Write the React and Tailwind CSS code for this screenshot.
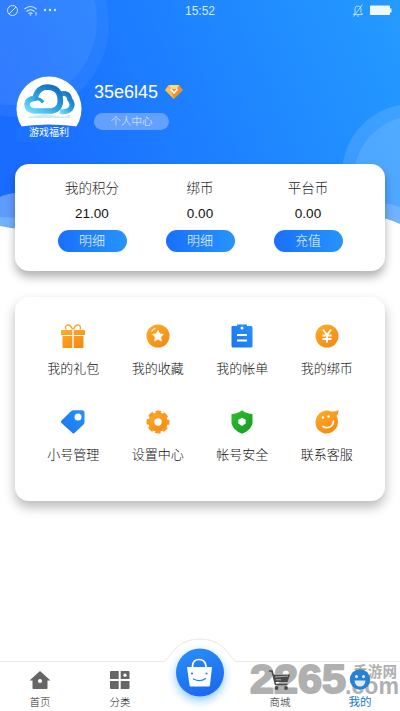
const FONT = { sans: "font-['Liberation_Sans','Noto_Sans_CJK_SC',sans-serif]" };

function Defs() {
  return (
    <svg width="0" height="0" className="absolute">
      <defs>
        <linearGradient id="orange" x1="0" y1="0" x2="0.7" y2="1">
          <stop offset="0" stopColor="#ffae2b" />
          <stop offset="1" stopColor="#f58a12" />
        </linearGradient>
        <linearGradient id="blue" x1="0" y1="1" x2="1" y2="0">
          <stop offset="0" stopColor="#1b74ee" />
          <stop offset="1" stopColor="#2493fb" />
        </linearGradient>
        <linearGradient id="bagBlue" x1="0" y1="0" x2="0.4" y2="1">
          <stop offset="0" stopColor="#2b90f6" />
          <stop offset="1" stopColor="#1c6cf0" />
        </linearGradient>
        <linearGradient id="green" x1="0" y1="0" x2="1" y2="1">
          <stop offset="0" stopColor="#2fc02d" />
          <stop offset="1" stopColor="#149a22" />
        </linearGradient>
        <linearGradient id="header" x1="0" y1="0.3" x2="1" y2="0">
          <stop offset="0" stopColor="#1a6cff" />
          <stop offset="0.5" stopColor="#1e84ff" />
          <stop offset="1" stopColor="#259bff" />
        </linearGradient>
        <linearGradient id="cloud" x1="0" y1="1" x2="0.8" y2="0">
          <stop offset="0" stopColor="#6fe0f5" />
          <stop offset="0.5" stopColor="#2ba3e2" />
          <stop offset="1" stopColor="#1670c4" />
        </linearGradient>
      </defs>
    </svg>
  );
}

function HeaderArt() {
  return (
    <svg className="absolute left-0 top-0 -z-10" width="400" height="270" viewBox="0 0 400 270">
      <rect width="400" height="270" fill="url(#header)" />
      <circle cx="16" cy="24" r="93" fill="#fff" opacity="0.05" />
      <circle cx="12" cy="20" r="85" fill="#fff" opacity="0.06" />
      <circle cx="412" cy="174" r="70" fill="#fff" opacity="0.12" />
      <circle cx="416" cy="178" r="62" fill="#fff" opacity="0.1" />
      <path d="M0 197Q8 193 18 193L70 220V270H0Z" fill="#6da5fb" opacity="0.85" />
      <path d="M0 217L60 220L340 205Q375 198 400 207V270H0Z" fill="#74b5fd" opacity="0.85" />
      <path d="M0 226Q60 238 200 230Q350 200 400 224V270H0Z" fill="#fff" />
    </svg>
  );
}

function StatusBar() {
  return (
    <div className="flex h-[22px] items-center px-[6px] text-[#d5e9ff]">
      <svg width="52" height="14" viewBox="0 0 52 14" fill="none" stroke="currentColor">
        <circle cx="6.500" cy="6.500" r="5" />
        <path d="M3 10L10 3" />
        <path d="M18.500 5Q24.500 0 30.500 5M20.500 7.500Q24.500 4 28.500 7.500M22.500 9.700Q24.500 8 26.500 9.700" strokeWidth="1.100" />
        <circle cx="24.500" cy="11" r=".8" fill="currentColor" stroke="none" />
        <path d="M30 8V11.500" />
        <g fill="currentColor" stroke="none">
          <circle cx="39" cy="6" r="1.200" />
          <circle cx="44" cy="6" r="1.200" />
          <circle cx="49" cy="6" r="1.200" />
        </g>
      </svg>
      <div className="flex-1 pr-[10px] text-center text-[12px]">15:52</div>
      <svg width="42" height="14" viewBox="0 0 42 14" fill="none" stroke="currentColor">
        <path d="M1.500 10.500H10.500L9 8.500V5Q9 2 6 2Q3 2 3 5V8.500ZM5 12H7M10.500 .5L1.500 12.500" strokeWidth=".8" />
        <rect x="18" y="1.500" width="20" height="9.500" rx="1" fill="#f0f8ff" stroke="none" />
        <rect x="38" y="4.500" width="1.500" height="4" fill="#f0f8ff" stroke="none" />
      </svg>
    </div>
  );
}

function Avatar() {
  return (
    <svg width="66" height="66" viewBox="0 0 66 66">
      <clipPath id="face"><circle cx="33" cy="33" r="32.500" /></clipPath>
      <g clipPath="url(#face)">
        <rect width="66" height="66" fill="#fff" />
      </g>
      <path d="M0 51Q33 46 66 51V66H0Z" fill="#1a72ff" />
      <path d="M12 41L28 38L48 41L54 39V42H12Z" fill="#9acbec" opacity=".45" />
      <path d="M44 18Q53 16 53.500 23Q58 28 54.500 33Q51 36.500 44 35.500" fill="none" stroke="url(#cloud)" strokeWidth="5" />
      <path d="M18 35Q11 34 11 28Q12 22.500 19 22.500Q21.500 11 32 11Q43 12 44 21Q46 33 36 35Z" fill="#fff" stroke="url(#cloud)" strokeWidth="5.500" strokeLinejoin="round" />
      <path d="M19 22.500Q25 22.500 27 26.500" fill="none" stroke="#259ddd" strokeWidth="3" />
      <text x="33" y="60" textAnchor="middle" fontSize="10" fill="#fff" className="font-['Noto_Sans_CJK_SC',sans-serif]">游戏福利</text>
    </svg>
  );
}

function Profile() {
  return (
    <div className="flex h-[88px] pl-[16px]">
      <Avatar />
      <div className="pl-[12px] pt-[4px]">
        <div className="flex h-[24px] items-center gap-[6px] text-[18px] text-white">
          <span className="w-[65px] whitespace-nowrap">35e6l45</span>
          <svg width="18" height="16" viewBox="0 0 18 16">
            <path d="M4 1H14L18 6L9 15L0 6Z" fill="#f08f2f" />
            <path d="M4 1H14L12 5H6Z" fill="#ffdc7a" />
            <path d="M0 6L4 1L9 15Z" fill="#fcbf52" />
            <path d="M5.500 5L9 9L12.500 5" fill="none" stroke="#fff" strokeWidth="1.800" />
          </svg>
        </div>
        <div className="mt-[9px] flex h-[17px] w-[75px] items-center justify-center rounded-full bg-[#64a1ff] text-[10.5px] font-light text-[#e5f2ff]">个人中心</div>
      </div>
    </div>
  );
}

function Balance({ label, value, action }) {
  return (
    <div className="flex w-[108px] flex-col items-center">
      <div className="h-[18px] text-[13.5px] font-light leading-[18px] text-[#222]">{label}</div>
      <div className="mt-[8px] h-[16px] text-[13.5px] leading-[16px] text-[#111]">{value}</div>
      <button className="mt-[8px] h-[22px] w-[69px] rounded-full bg-linear-to-r from-[#1a6ffa] to-[#2794fc] text-[13px] font-light leading-[22px] text-[#f2f9ff]">{action}</button>
    </div>
  );
}

const icons = {
  gift: (
    <g fill="url(#orange)">
      <path d="M1 6H11.300V11H0V7Q0 6 1 6ZM12.700 6H23Q24 6 24 7V11H12.700ZM1.500 12H11.300V24H2.500Q1.500 24 1.500 23ZM12.700 12H22.500V23Q22.500 24 21.500 24H12.700Z" />
      <path d="M11.500 5.500Q10 .800 6.500 1Q3.500 2 5 5.500M12.500 5.500Q14 .800 17.500 1Q20.500 2 19 5.500" fill="none" stroke="#f9a12a" strokeWidth="1.300" />
    </g>
  ),
  star: (
    <>
      <circle cx="12" cy="12" r="11.500" fill="url(#orange)" />
      <path d="M12 6.300L13.700 9.900L17.300 10.300L14.700 13L15.400 17L12 15.100L8.600 17L9.300 13L6.700 10.300L10.300 9.900Z" fill="#fff" stroke="#fff" strokeWidth=".8" strokeLinejoin="round" />
      <path d="M6 7Q7 5.300 8.800 4.500" fill="none" stroke="#fff" strokeWidth="1.300" strokeLinecap="round" opacity=".85" />
    </>
  ),
  bill: (
    <>
      <path d="M2 2H7V.500H17V2H21Q22.500 2 22.500 3.500V22Q22.500 23.500 21 23.500H3Q1.500 23.500 1.500 22V2.500Z" fill="url(#blue)" />
      <circle cx="12" cy="4" r="1.500" fill="#fff" />
      <path d="M7 11H17M7 16.500H17" stroke="#fff" strokeWidth="2" />
    </>
  ),
  coin: (
    <>
      <circle cx="12" cy="12" r="11.500" fill="url(#orange)" />
      <path d="M8 5.500L12 11L16 5.500M12 11V18.500M7.500 11.500H16.500M7.500 15H16.500" fill="none" stroke="#fff" strokeWidth="1.900" />
    </>
  ),
  tag: (
    <>
      <path d="M0 12Q0 11 .5 10.500L10 1.300Q11 .300 12.500 .300H21.500Q23.500 .500 23.500 2.500V12Q23.500 13.500 22.500 14.500L13.500 23Q12.500 24 11.500 23L.5 13Q0 12.500 0 12Z" fill="url(#blue)" />
      <circle cx="17" cy="7" r="3.500" fill="#fff" />
    </>
  ),
  gear: (
    <>
      <circle cx="12" cy="12" r="9.800" fill="url(#orange)" />
      <circle cx="12" cy="12" r="9.900" fill="none" stroke="#f99a20" strokeWidth="3.200" strokeDasharray="5.200 2.575" strokeDashoffset="2.600" />
      <circle cx="12" cy="12" r="3.700" fill="#fff" />
    </>
  ),
  shield: (
    <>
      <path d="M12 .200Q17 4 22.500 4V13Q21.500 20 12 23.700Q2.500 20 1.500 13V4Q7 4 12 .200Z" fill="url(#green)" />
      <path d="M12 7.800L15.700 9.700V13.500L12 16L8.300 13.500V9.700Z" fill="#fff" />
    </>
  ),
  support: (
    <>
      <path d="M16 1.500Q20 2 23.500 0Q24 3 21.500 6Q25 13 20.500 19Q15 25 8 23Q0 20 .500 11.500Q1 5 7 1.800Q12 -.500 16 1.500Z" fill="url(#orange)" />
      <circle cx="8" cy="7.500" r="1.200" fill="#fff" />
      <circle cx="13.500" cy="6.500" r="1.200" fill="#fff" />
      <path d="M18.500 11Q18 17 13 17.500Q10 18 8 16.500" fill="none" stroke="#fff" strokeWidth="1.700" strokeLinecap="round" />
    </>
  ),
};

const entries = [
  ["gift", "我的礼包"], ["star", "我的收藏"], ["bill", "我的帐单"], ["coin", "我的绑币"],
  ["tag", "小号管理"], ["gear", "设置中心"], ["shield", "帐号安全"], ["support", "联系客服"],
];

function NavItem({ label, active, children }) {
  return (
    <div className="flex w-[80px] flex-col items-center pt-[8px]">
      <svg width="22" height="22" viewBox="0 0 22 22" className="overflow-visible">{children}</svg>
      <div className={active ? "mt-[2px] text-[11.5px] leading-[16px] text-[#1d7ac8]" : "mt-[2px] text-[10.5px] font-light leading-[16px] text-[#222]"}>{label}</div>
    </div>
  );
}

function Watermark() {
  return (
    <svg className="absolute left-[245px] top-[-10px] overflow-visible" width="155" height="60" viewBox="0 0 155 60">
      <g fill="#b0b0b0" fontWeight="700" className="font-['Liberation_Sans','Noto_Sans_CJK_SC',sans-serif]">
        <text x="5" y="41" fontSize="41" textLength="96" lengthAdjust="spacingAndGlyphs" stroke="#b0b0b0" strokeWidth="2" strokeLinejoin="round">2265</text>
        <text x="108" y="25" fontSize="14.500" textLength="44">手游网</text>
        <text x="100" y="42" fontSize="24" textLength="54" lengthAdjust="spacingAndGlyphs">.com</text>
      </g>
    </svg>
  );
}

function BottomNav() {
  return (
    <div className="relative isolate flex h-[50px] border-t border-[#e8e8e8] bg-white">
      <div className="absolute inset-0 -z-10"><Watermark /></div>
      <NavItem label="首页">
        <path d="M11 1L21.500 10.500H18.500V18Q18.500 19 17.500 19H4.500Q3.500 19 3.500 18V10.500H.500Z" fill="#666" />
        <circle cx="11" cy="11" r="2.100" fill="#fff" />
      </NavItem>
      <NavItem label="分类">
        <path d="M2 1H9.700V9H1V2Q1 1 2 1ZM11.700 1H19.500Q20.500 1 20.500 2V9H11.700ZM1 11H9.700V19H2Q1 19 1 18ZM11.700 11H20.500V18Q20.500 19 19.500 19H11.700Z" fill="#666" />
        <circle cx="16" cy="5.200" r="1.600" fill="#fff" />
      </NavItem>
      <div className="w-[80px]" />
      <NavItem label="商城">
        <path d="M0 1H3L6.500 14.500H18.500" fill="none" stroke="#4a4a4a" strokeWidth="1.600" />
        <path d="M4 4.500H21L18.500 12H6Z" fill="#4a4a4a" />
        <path d="M6 7L19 6M7 9.800H12" stroke="#b0b0b0" strokeWidth="1" />
        <circle cx="7.500" cy="18" r="1.900" fill="#4a4a4a" />
        <circle cx="17" cy="18" r="1.900" fill="#4a4a4a" />
      </NavItem>
      <NavItem label="我的" active>
        <circle cx="11" cy="9.500" r="10.200" fill="#2a80d2" />
        <circle cx="7.500" cy="6.500" r="1.500" fill="#dcecf8" />
        <circle cx="14.500" cy="6.500" r="1.500" fill="#dcecf8" />
        <path d="M5.500 10.500H16.500Q16 16.500 11 16.500Q6 16.500 5.500 10.500Z" fill="#dcecf8" />
      </NavItem>
      <svg className="absolute left-[150px] top-[-30px]" width="100" height="80" viewBox="0 0 100 80">
        <path d="M14 30Q17 28 20 23Q31 7 50 7Q69 7 80 23Q83 28 86 30V80H14Z" fill="#fff" />
        <path d="M14 29.500Q17 28 20 23Q31 7 50 7Q69 7 80 23Q83 28 86 29.500" fill="none" stroke="#e8e8e8" />
        <circle cx="50" cy="40.500" r="24" fill="url(#bagBlue)" className="drop-shadow-[0_4px_5px_#8fc8ff]" />
        <path d="M42.500 36V34Q43 27.500 49 27.500Q55 27.500 56 34V36" fill="none" stroke="#fff" strokeWidth="1.700" />
        <path d="M37 35H62L60 53Q60 54.500 58.500 54.500H41Q39.500 54.500 39.500 53Z" fill="#fff" />
        <circle cx="42" cy="41.500" r="1.100" fill="#2385f4" />
        <circle cx="56.500" cy="41.500" r="1.100" fill="#2385f4" />
        <path d="M43.500 47Q50 50.500 55.500 46.500" fill="none" stroke="#2385f4" strokeWidth="1.300" strokeLinecap="round" />
      </svg>
    </div>
  );
}

export default function App() {
  return (
    <div className={`relative isolate flex h-[711px] w-[400px] flex-col overflow-hidden bg-white ${FONT.sans}`}>
      <Defs />
      <HeaderArt />
      <StatusBar />
      <div className="h-[54px]" />
      <Profile />
      <section className="mx-[15px] flex h-[107px] justify-center rounded-[14px] bg-white pt-[16px] shadow-[0_6px_10px_rgba(0,0,0,0.3)]">
        <Balance label="我的积分" value="21.00" action="明细" />
        <Balance label="绑币" value="0.00" action="明细" />
        <Balance label="平台币" value="0.00" action="充值" />
      </section>
      <section className="mx-[15px] mt-[26px] grid h-[204px] grid-cols-4 content-start gap-y-[41px] rounded-[14px] bg-white px-[16px] pt-[27px] shadow-[0_6px_12px_rgba(0,0,0,0.28)]">
        {entries.map(([icon, label]) => (
          <div key={icon} className="flex h-[45px] flex-col items-center">
            <svg className="shrink-0" width="24" height="24" viewBox="0 0 24 24">{icons[icon]}</svg>
            <div className="mt-[12px] whitespace-nowrap text-[13px] font-light leading-[18px] text-[#111]">{label}</div>
          </div>
        ))}
      </section>
      <div className="flex-1" />
      <BottomNav />
    </div>
  );
}
